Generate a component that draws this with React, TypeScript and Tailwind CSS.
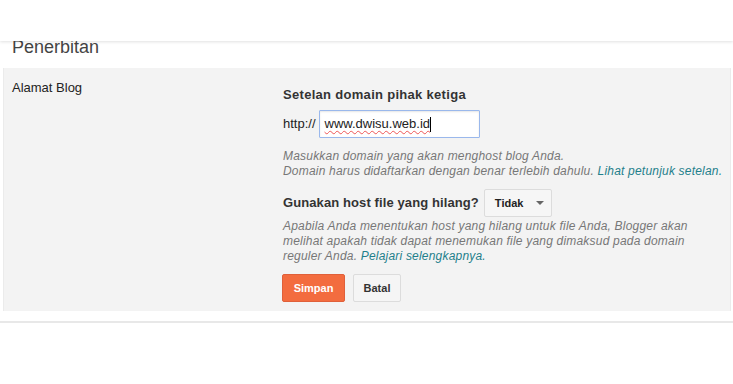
import React from "react";

export default function App() {
  return (
    <div className="w-[733px] h-[384px] bg-white overflow-hidden relative" style={{ fontFamily: '"Liberation Sans", Arial, sans-serif' }}>
      <div className="h-[41px] bg-white shadow-[0_1px_3px_rgba(0,0,0,0.12)] relative z-10" />
      <div className="pl-[12px] h-[31px] -mt-[4px] text-[18px] leading-[20px] text-[#444]">Penerbitan</div>
      <div className="ml-[3px] w-[728px] bg-[#f3f3f3] border-l border-r border-[#ebebeb] flex pt-[12px] h-[243px]">
        <div className="w-[279px] pl-[8px] text-[13px] leading-[15px] text-[#222]">Alamat Blog</div>
        <div className="flex flex-col">
          <div className="mt-[7px] text-[13px] leading-[15px] font-bold text-[#333] tracking-[0.3px]">Setelan domain pihak ketiga</div>
          <div className="flex items-center mt-[8px]">
            <span className="text-[13px] text-[#222]">http://</span>
            <div className="ml-[3px] w-[161px] h-[28px] bg-white border border-[#9ab8ec] rounded-[1px] flex items-center pl-[5px] text-[13px] text-[#222] shadow-[inset_0_1px_2px_rgba(0,0,0,0.1)]">
              <span className="underline decoration-wavy decoration-[#e55] decoration-1 underline-offset-2">www.dwisu.web.id</span>
              <span className="w-[1px] h-[15px] bg-black" />
            </div>
          </div>
          <div className="mt-[11px] text-[12px] leading-[15px] italic text-[#777] tracking-[0.2px]">
            Masukkan domain yang akan menghost blog Anda.
            <br />
            Domain harus didaftarkan dengan benar terlebih dahulu.{" "}
            <span className="text-[#1f7f8b]">Lihat petunjuk setelan.</span>
          </div>
          <div className="flex items-center mt-[10px]">
            <span className="text-[13px] font-bold text-[#333] tracking-[0.1px]">Gunakan host file yang hilang?</span>
            <div className="ml-[5px] w-[68px] h-[28px] border border-[#dcdcdc] rounded-[2px] bg-[#f6f6f6] flex items-center pl-[10px]">
              <span className="text-[11px] font-bold text-[#222]">Tidak</span>
              <svg className="ml-[13px]" width="8" height="4" viewBox="0 0 8 4"><path d="M0 0h8L4 4z" fill="#666" /></svg>
            </div>
          </div>
          <div className="mt-[2px] text-[12px] leading-[15px] italic text-[#777] tracking-[0.2px]">
            Apabila Anda menentukan host yang hilang untuk file Anda, Blogger akan
            <br />
            melihat apakah tidak dapat menemukan file yang dimaksud pada domain
            <br />
            reguler Anda. <span className="text-[#1f7f8b]">Pelajari selengkapnya.</span>
          </div>
          <div className="flex mt-[10px] gap-[8px] -ml-[1px]">
            <div className="w-[63px] h-[28px] rounded-[2px] bg-[#f36c3f] border border-[#e0603a] flex items-center justify-center text-[11px] font-bold text-white">Simpan</div>
            <div className="w-[48px] h-[28px] rounded-[2px] bg-[#f5f5f5] border border-[#dcdcdc] flex items-center justify-center text-[11px] font-bold text-[#333]">Batal</div>
          </div>
        </div>
      </div>
      <div className="mt-[10px] h-[2px] bg-[#e8e8e8]" />
    </div>
  );
}
